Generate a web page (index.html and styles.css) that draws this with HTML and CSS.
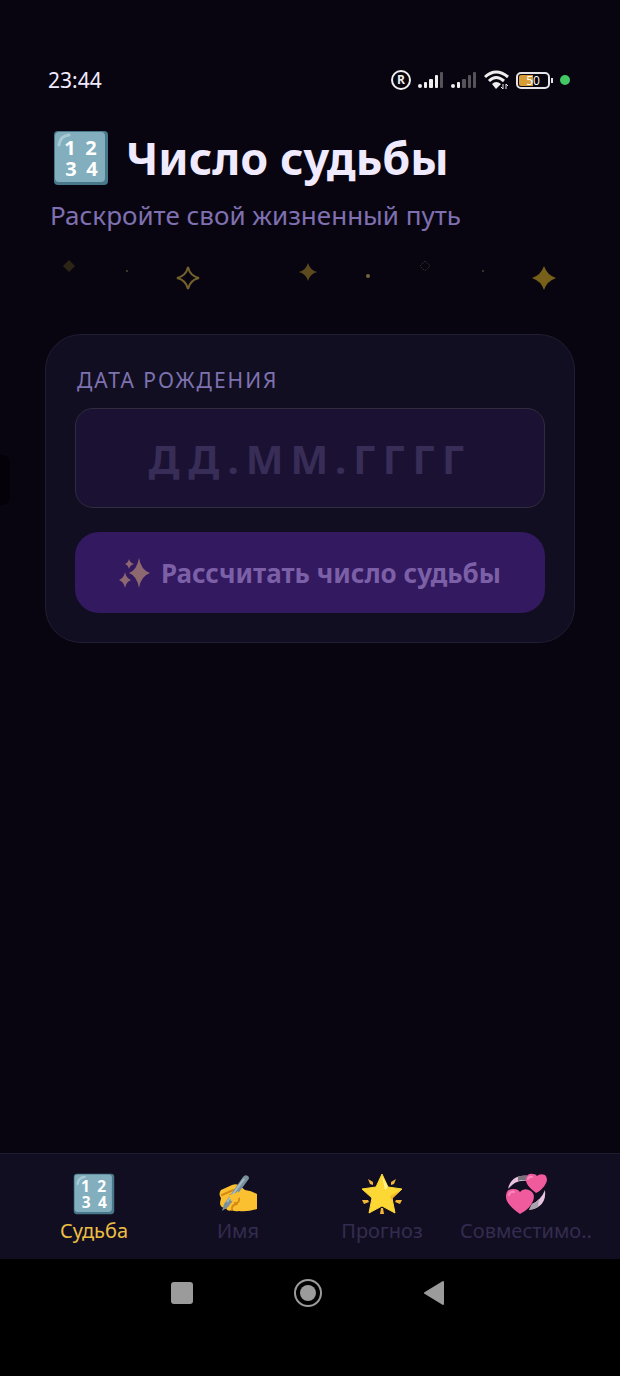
FILE: index.html
```html
<!DOCTYPE html>
<html lang="ru">
<head>
    <meta charset="UTF-8">
    <meta name="viewport" content="width=device-width, initial-scale=1.0">
    <title>Число судьбы</title>
    <link rel="stylesheet" href="styles.css">
</head>
<body>

<div class="app">
    <div class="edge-handle"></div>

    <div class="status-bar">
        <span>23:44</span>
        <div class="status-icons">
            <svg width="20" height="20" viewBox="0 0 20 20">
                <circle cx="10" cy="10" r="9" fill="none" stroke="#eee" stroke-width="2"/>
                <text x="10" y="14" class="reg">R</text>
            </svg>
            <svg width="26" height="16" viewBox="0 0 26 16" fill="#eee">
                <circle cx="2" cy="14" r="2"/>
                <rect x="6" y="10" width="3" height="6" rx="1"/>
                <rect x="11" y="7" width="4" height="9" rx="1"/>
                <rect x="17" y="3" width="3" height="13" rx="1"/>
                <rect x="22" y="0" width="3" height="16" rx="1" fill="#55525a"/>
            </svg>
            <svg width="26" height="16" viewBox="0 0 26 16" fill="#55525a">
                <circle cx="2" cy="14" r="2" fill="#eee"/>
                <rect x="6" y="10" width="3" height="6" rx="1" fill="#eee"/>
                <rect x="11" y="7" width="4" height="9" rx="1"/>
                <rect x="17" y="3" width="3" height="13" rx="1"/>
                <rect x="22" y="0" width="3" height="16" rx="1"/>
            </svg>
            <svg width="25" height="20" viewBox="0 0 25 20" fill="none" stroke="#eee" stroke-width="3">
                <path d="M1 7Q12-3 24 7M5 11Q12 4 20 11"/>
                <path d="M8 14Q12 10 17 14L12 19Z" fill="#eee" stroke="none"/>
                <path d="M19 14v5M17 17l2 2M22 19v-5M24 16l-2-2" stroke-width="1"/>
            </svg>
            <svg width="37" height="17" viewBox="0 0 37 17">
                <rect x="1" y="1" width="32" height="15" rx="4" fill="none" stroke="#e5e2e8" stroke-width="2"/>
                <path d="M5 3H17V14H5Q3 14 3 12V5Q3 3 5 3Z" fill="#d89c35"/>
                <path d="M36 6v5" stroke="#e5e2e8" stroke-width="2"/>
                <text x="17" y="13" class="charge">50</text>
            </svg>
            <span class="dot"></span>
        </div>
    </div>

    <header class="header">
        <h1>
            <svg width="54" height="54" viewBox="0 0 54 54">
                <rect width="54" height="54" rx="4" fill="#487889"/>
                <rect x="1" y="1" width="50" height="50" rx="4" fill="#82aebd"/>
                <path d="M5 14Q6 5 15 4" fill="none" stroke="#a9cbd5" stroke-width="3" stroke-linecap="round"/>
                <g class="digits">
                    <text x="16" y="24">1</text>
                    <text x="37" y="24">2</text>
                    <text x="17" y="45">3</text>
                    <text x="38" y="45">4</text>
                </g>
            </svg>
            Число судьбы
        </h1>
        <p>Раскройте свой жизненный путь</p>
    </header>

    <div class="stars">
        <svg class="star-s" viewBox="0 0 12 12"><path d="M6 0L12 6L6 12L0 6Z" fill="#2c2516"/></svg>
        <svg class="star-m" viewBox="0 0 22 22"><circle cx="10" cy="11" r="1" fill="#524a3a"/></svg>
        <svg class="star-l" viewBox="0 0 36 36"><path d="M18 7Q20 16 29 18Q20 20 18 29Q16 20 7 18Q16 16 18 7Z" fill="none" stroke="#72602d" stroke-width="2"/></svg>
        <span></span>
        <svg class="star-m" viewBox="0 0 22 22"><path d="M13 3Q15 10 22 12Q15 14 13 21Q11 14 4 12Q11 10 13 3Z" fill="#5b4a1e"/></svg>
        <svg class="star-x" viewBox="0 0 32 32"><circle cx="18" cy="16" r="2" fill="#716442"/></svg>
        <svg class="star-s" viewBox="0 0 12 12"><path d="M6 1L11 6L6 11L1 6Z" fill="none" stroke="#302b2c" stroke-dasharray="2 1"/></svg>
        <svg class="star-m" viewBox="0 0 22 22"><circle cx="9" cy="11" r="1" fill="#49423a"/></svg>
        <svg class="star-l" viewBox="0 0 36 36"><path d="M18 6Q21 15 30 18Q21 21 18 30Q15 21 6 18Q15 15 18 6Z" fill="#776019"/></svg>
    </div>

    <form class="card">
        <label for="birthdate">Дата рождения</label>
        <input type="text" id="birthdate" placeholder="ДД.ММ.ГГГГ" inputmode="numeric">
        <button type="button">
            <svg width="32" height="32" viewBox="0 0 32 32" fill="#8e6871">
                <path d="M20 1Q22 13 31 16Q22 19 20 31Q18 19 10 16Q18 13 20 1ZM6 15Q7 21 12 23Q7 25 6 31Q5 25 0 23Q5 21 6 15ZM10 2Q11 6 15 7Q11 8 10 12Q9 8 6 7Q9 6 10 2Z"/>
            </svg>
            Рассчитать число судьбы
        </button>
    </form>

    <nav class="tabs">
        <a href="#fate" class="active">
            <svg width="42" height="42" viewBox="0 0 54 54">
                <rect x="1" y="1" width="52" height="52" rx="4" fill="#487889"/>
                <rect x="2" y="2" width="48" height="48" rx="4" fill="#82aebd"/>
                <path d="M6 14Q7 6 15 5" fill="none" stroke="#a9cbd5" stroke-width="3" stroke-linecap="round"/>
                <g class="digits">
                    <text x="16" y="24">1</text>
                    <text x="37" y="24">2</text>
                    <text x="17" y="45">3</text>
                    <text x="38" y="45">4</text>
                </g>
            </svg>
            <span>Судьба</span>
        </a>
        <a href="#name">
            <svg width="42" height="42" viewBox="0 0 42 42">
                <path d="M4 17L15 12Q20 10 23 13L28 17Q35 18 40 21V36Q31 39 22 38Q18 39 15 37Q10 39 9 35Q3 35 3 30L4 25Q1 21 4 17Z" fill="#fbc02f"/>
                <path d="M5 22L14 18Q18 16 20 18Q19 22 13 22M9 35Q8 30 14 29M15 37Q14 32 20 31M22 25Q23 30 18 30" fill="none" stroke="#d68a16" stroke-width="2" stroke-linecap="round"/>
                <path d="M26 4Q28 1 31 3Q33 5 31 7L11 34L5 38L7 31Z" fill="#78919c"/>
                <path d="M27 6L10 29" stroke="#a6bbc2" stroke-width="2"/>
                <path d="M12 22Q18 21 21 18L23 24Q19 28 14 28Z" fill="#fbc02f"/>
            </svg>
            <span>Имя</span>
        </a>
        <a href="#forecast">
            <svg width="42" height="42" viewBox="0 0 42 42">
                <path d="M21 1L27 14L41 16L31 25L34 40L21 33L8 40L11 25L1 16L15 14Z" fill="#fdd835" stroke="#fdd835" stroke-width="1" stroke-linejoin="round"/>
                <path d="M21 3L27 14L24 17Z" fill="#fff48a"/>
                <path d="M40 17L29 23L34 39L30 27Z" fill="#f4b72c"/>
                <path d="M7 6L12 9L12 12L9 11ZM35 6L30 9L30 12L33 11ZM1 27L7 27L8 29L3 31ZM41 27L35 27L34 29L39 31ZM20 35H22L23 41H19Z" fill="#f4b53b"/>
            </svg>
            <span>Прогноз</span>
        </a>
        <a href="#match">
            <svg width="42" height="42" viewBox="0 0 42 42">
                <path d="M3 16Q6 1 24 3L22 8Q11 6 3 16Z" fill="#e7c3df"/>
                <path d="M13 4Q19 1 24 3L22 8Q17 6 13 8Z" fill="#77727a"/>
                <path d="M40 17Q42 34 24 37L27 31Q36 27 40 17Z" fill="#e7c3df"/>
                <path d="M24 37L27 31Q31 30 34 26L33 34Q29 37 24 37Z" fill="#aaa2ac"/>
                <path d="M15 41Q0 31 1 22Q2 15 9 16Q13 16 15 19Q18 15 24 17Q31 20 28 28Q25 36 15 41Z" fill="#f05b9d"/>
                <path d="M31 20Q20 12 21 6Q22 0 28 1Q31 1 32 3Q35 0 40 2Q44 6 40 12Q37 17 31 20Z" fill="#f05b9d"/>
                <path d="M4 22Q5 18 9 19M23 6Q24 3 27 4" fill="none" stroke="#fa8aba" stroke-width="2" stroke-linecap="round"/>
            </svg>
            <span>Совместимо..</span>
        </a>
    </nav>

    <div class="system-nav">
        <button type="button" aria-label="Недавние">
            <svg width="30" height="30" viewBox="0 0 30 30"><rect x="4" y="4" width="22" height="22" rx="3"/></svg>
        </button>
        <button type="button" aria-label="Домой">
            <svg width="30" height="30" viewBox="0 0 30 30"><circle cx="15" cy="15" r="13" fill="none" stroke="#9b9b9b" stroke-width="2"/><circle cx="15" cy="15" r="8"/></svg>
        </button>
        <button type="button" aria-label="Назад">
            <svg width="30" height="30" viewBox="0 0 30 30"><path d="M6 15L24 4V26Z" stroke="#9b9b9b" stroke-width="2" stroke-linejoin="round"/></svg>
        </button>
    </div>
</div>

</body>
</html>
```
FILE: styles.css
```css
* {
    box-sizing: border-box;
}
body {
    margin: 0;
    background-color: #090510;
    color: #f0eaff;
    font-family: 'Noto Sans', sans-serif;
}
svg {
    display: block;
    flex-shrink: 0;
}
.digits {
    fill: #fff;
    font: bold 20px 'Open Sans', sans-serif;
    text-anchor: middle;
}
.app {
    position: relative;
    display: flex;
    flex-direction: column;
    min-height: 100vh;
}
.edge-handle {
    position: absolute;
    left: 0;
    top: 455px;
    width: 10px;
    height: 50px;
    background-color: #040208;
    border-radius: 0 8px 8px 0;
}
.status-bar {
    display: flex;
    align-items: center;
    justify-content: space-between;
    padding: 66px 50px 0 48px;
    font-size: 21px;
    line-height: 28px;
}
.status-icons {
    display: flex;
    align-items: center;
    gap: 7px;
}
.reg {
    fill: #eee;
    font: bold 12px 'Open Sans', sans-serif;
    text-anchor: middle;
}
.charge {
    fill: #fff;
    font: 12px 'Open Sans', sans-serif;
    text-anchor: middle;
}
.dot {
    width: 10px;
    height: 10px;
    border-radius: 50%;
    background-color: #42c966;
}
.header {
    padding: 34px 50px 0;
}
.header h1 {
    display: flex;
    align-items: center;
    gap: 18px;
    margin: 0;
    padding-left: 4px;
    font-size: 45px;
    line-height: 60px;
}
.header p {
    margin: 10px 0 0;
    color: #7f70b1;
    font-size: 26px;
    line-height: 34px;
}
.stars {
    display: grid;
    grid-template-columns: repeat(9, 1fr);
    justify-items: center;
    height: 36px;
    margin: 28px 46px 0 39px;
}
.star-s {
    width: 12px;
    height: 12px;
}
.star-m {
    width: 22px;
    height: 22px;
}
.star-l {
    width: 36px;
    height: 36px;
}
.star-x {
    width: 32px;
    height: 32px;
}
.card {
    display: flex;
    flex-direction: column;
    margin: 38px 45px;
    padding: 29px;
    border: 1px solid #211d33;
    border-radius: 36px;
    background-color: #120e21;
}
.card label {
    margin-bottom: 12px;
    padding-left: 2px;
    color: #7e72b0;
    font-size: 21px;
    line-height: 32px;
    letter-spacing: 2px;
    text-transform: uppercase;
}
.card input {
    width: 100%;
    height: 100px;
    margin-bottom: 24px;
    border: 1px solid #302b3e;
    border-radius: 18px;
    background-color: #1b1233;
    color: #f0eaff;
    font: bold 40px 'Noto Sans', sans-serif;
    letter-spacing: 7px;
    text-align: center;
}
.card input::placeholder {
    color: #382d57;
}
.card button {
    display: flex;
    align-items: center;
    justify-content: center;
    gap: 10px;
    height: 81px;
    padding: 0;
    border: none;
    border-radius: 24px;
    background-color: #33195f;
    color: #7b60a7;
    font: bold 26px 'Noto Sans', sans-serif;
}
.tabs {
    display: grid;
    grid-template-columns: repeat(4, 1fr);
    height: 106px;
    margin-top: auto;
    padding: 19px 22px 0;
    border-top: 1px solid #201c31;
    background-color: #120e21;
}
.tabs a {
    display: flex;
    flex-direction: column;
    align-items: center;
    gap: 2px;
    color: #342c50;
    font-size: 20px;
    line-height: 28px;
    text-decoration: none;
    white-space: nowrap;
}
.tabs .active {
    color: #edbf43;
}
.system-nav {
    display: flex;
    justify-content: center;
    gap: 96px;
    height: 117px;
    padding: 19px 4px 0 0;
    background-color: #000;
}
.system-nav button {
    width: 30px;
    height: 30px;
    padding: 0;
    border: none;
    background: none;
    fill: #9b9b9b;
}
```
